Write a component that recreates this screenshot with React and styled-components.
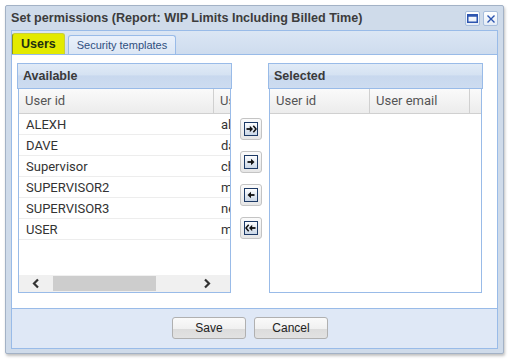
import React from 'react';
import styled, { createGlobalStyle } from 'styled-components';

const GlobalStyle = createGlobalStyle`
    html, body {
        margin: 0;
        padding: 0;
        background: #ffffff;
    }
    body {
        width: 509px;
        height: 361px;
        overflow: hidden;
    }
`;

const Page = styled.div`
    padding: 5px 0 0 5px;
`;

const Window = styled.div`
    width: 497px;
    height: 347px;
    border: 1px solid #a3b2c6;
    border-radius: 2px;
    background: #cfdbea;
    box-shadow: 1px 2px 3px rgba(0, 0, 0, 0.25);
    display: flex;
    flex-direction: column;
`;

const TitleBar = styled.div`
    height: 24px;
    display: flex;
    align-items: center;
    padding: 0 5px 0 5px;
`;

const Title = styled.div`
    flex: 1;
    font-family: 'Liberation Sans', Arial, sans-serif;
    font-weight: bold;
    font-size: 12.6px;
    color: #3c3c3c;
    white-space: nowrap;
`;

const Tools = styled.div`
    display: flex;
    gap: 3px;
    margin-top: 1px;
`;

const Tool = styled.div`
    width: 13px;
    height: 13px;
    border: 1px solid #a8bedc;
    border-radius: 2px;
    background: linear-gradient(#ffffff, #e4ecf6);
    display: flex;
    align-items: center;
    justify-content: center;
`;

const Frame = styled.div`
    flex: 1;
    margin: 0 5px 4px 5px;
    border: 1px solid #99bbe8;
    display: flex;
    flex-direction: column;
    background: #dfe8f6;
`;

const TabStrip = styled.div`
    height: 23px;
    display: flex;
    align-items: flex-end;
    gap: 3px;
    padding-left: 0;
    background: linear-gradient(#dbe6f4, #cedcee);
    border-bottom: 1px solid #99bbe8;
`;

const Tab = styled.div`
    height: ${p => (p.active ? '21px' : '19px')};
    padding: 0 8px;
    display: flex;
    align-items: center;
    font-family: 'Liberation Sans', Arial, sans-serif;
    font-size: ${p => (p.active ? '12.5px' : '11px')};
    font-weight: ${p => (p.active ? 'bold' : 'normal')};
    color: ${p => (p.active ? '#1f3010' : '#2f4f80')};
    background: ${p => (p.active ? '#e3ea00' : 'linear-gradient(#eaf1fb, #dbe6f4)')};
    border: 1px solid ${p => (p.active ? '#c9cf3a' : '#99bbe8')};
    border-left-color: ${p => (p.active ? '#8f9515' : '#99bbe8')};
    border-bottom: none;
    border-radius: 3px 3px 0 0;
    box-sizing: border-box;
`;

const Content = styled.div`
    height: 254px;
    background: #ffffff;
    border-bottom: 1px solid #99bbe8;
    display: flex;
    padding: 8px 0 0 5px;
    box-sizing: border-box;
`;

const GridPanel = styled.div`
    width: 215px;
    height: 230px;
    display: flex;
    flex-direction: column;
`;

const PanelHeader = styled.div`
    height: 26px;
    box-sizing: border-box;
    border: 1px solid #99bbe8;
    background: linear-gradient(#e1ebf7 0%, #d5e2f2 45%, #c8d8ee 50%, #cddcf0 100%);
    font-family: 'Liberation Sans', Arial, sans-serif;
    font-weight: bold;
    font-size: 12.5px;
    color: #3a3a3a;
    padding: 5px 0 0 5px;
`;

const GridBody = styled.div`
    flex: 1;
    margin: 0 1px;
    border: 1px solid #99bbe8;
    border-top: none;
    overflow: hidden;
    display: flex;
    flex-direction: column;
`;

const HeaderRow = styled.div`
    height: 24px;
    display: flex;
    background: linear-gradient(#fafafa, #ececec);
    border-bottom: 1px solid #d0d0d0;
    flex-shrink: 0;
`;

const HeaderCell = styled.div`
    width: ${p => p.w}px;
    flex-shrink: 0;
    box-sizing: border-box;
    border-right: ${p => (p.last ? 'none' : '1px solid #d0d0d0')};
    padding: 4px 0 0 6px;
    font-family: Roboto, 'Liberation Sans', sans-serif;
    font-size: 13px;
    color: #555555;
    white-space: nowrap;
    overflow: hidden;
`;

const Row = styled.div`
    height: 21px;
    display: flex;
    border-bottom: 1px solid #ededed;
    box-sizing: border-box;
`;

const Cell = styled.div`
    width: ${p => p.w}px;
    flex-shrink: 0;
    padding: 3px 0 0 7px;
    box-sizing: border-box;
    font-family: Roboto, 'Liberation Sans', sans-serif;
    font-size: 13px;
    color: #333333;
    white-space: nowrap;
    overflow: hidden;
`;

const Rows = styled.div`
    flex: 1;
`;

const HScroll = styled.div`
    height: 17px;
    background: #f0f0f0;
    display: flex;
    align-items: center;
    flex-shrink: 0;
`;

const ScrollArrow = styled.div`
    width: ${p => p.w}px;
    display: flex;
    justify-content: center;
    align-items: center;
`;

const Thumb = styled.div`
    width: 103px;
    height: 15px;
    background: #cdcdcd;
`;

const Spacer = styled.div`
    flex: 1;
`;

const MoveColumn = styled.div`
    width: 22px;
    margin: 55px 6px 0 8px;
    display: flex;
    flex-direction: column;
    gap: 11px;
`;

const MoveButton = styled.div`
    width: 22px;
    height: 22px;
    box-sizing: border-box;
    border: 1px solid #c4c4c4;
    border-radius: 3px;
    background: linear-gradient(#fbfbfb, #e6e6e6);
    display: flex;
    align-items: center;
    justify-content: center;
`;

const Footer = styled.div`
    flex: 1;
    display: flex;
    justify-content: center;
    align-items: flex-start;
    gap: 8px;
    padding: 8px 9px 0 0;
`;

const Button = styled.div`
    width: 74px;
    height: 22px;
    box-sizing: border-box;
    border: 1px solid #b0b0b0;
    border-radius: 3px;
    background: linear-gradient(#fafafa 0%, #f0f0f0 55%, #dcdcdc 56%, #e2e2e2 100%);
    display: flex;
    align-items: center;
    justify-content: center;
    font-family: 'Liberation Sans', Arial, sans-serif;
    font-size: 12px;
    color: #222222;
`;

const MoveIcon = ({ kind }) => {
    const arrows = {
        addAll: (
            <>
                <path d="M2.5 7h4.5" stroke="#111" strokeWidth="1.8" />
                <path d="M5.8 3.8L9 7L5.8 10.2Z" fill="#111" />
                <path d="M9.3 3.8L12 7L9.3 10.2" stroke="#111" strokeWidth="1.5" fill="none" />
            </>
        ),
        add: (
            <>
                <path d="M3.5 7h4.5" stroke="#111" strokeWidth="1.8" />
                <path d="M7 3.8L10.5 7L7 10.2Z" fill="#111" />
            </>
        ),
        remove: (
            <>
                <path d="M10.5 7H6" stroke="#111" strokeWidth="1.8" />
                <path d="M7 3.8L3.5 7L7 10.2Z" fill="#111" />
            </>
        ),
        removeAll: (
            <>
                <path d="M11.5 7H7" stroke="#111" strokeWidth="1.8" />
                <path d="M8.2 3.8L5 7L8.2 10.2Z" fill="#111" />
                <path d="M4.7 3.8L2 7L4.7 10.2" stroke="#111" strokeWidth="1.5" fill="none" />
            </>
        ),
    };
    return (
        <svg width="14" height="14" viewBox="0 0 14 14">
            <defs>
                <linearGradient id={`g-${kind}`} x1="0" y1="0" x2="0" y2="1">
                    <stop offset="0" stopColor="#ffffff" />
                    <stop offset="1" stopColor="#c9d6e6" />
                </linearGradient>
            </defs>
            <rect x="0.5" y="0.5" width="13" height="13" fill={`url(#g-${kind})`} stroke="#1d3a66" />
            {arrows[kind]}
        </svg>
    );
};

const users = [
    ['ALEXH', 'alexh@example.com'],
    ['DAVE', 'dave@example.com'],
    ['Supervisor', 'chris@example.com'],
    ['SUPERVISOR2', 'mark@example.com'],
    ['SUPERVISOR3', 'neil@example.com'],
    ['USER', 'mary@example.com'],
];

// the email column of the left grid is scrolled out of view, only its first letters show
const EMAIL_VISIBLE = 18;

class App extends React.Component {
    render() {
        return (
            <Page>
                <GlobalStyle />
                <Window>
                    <TitleBar>
                        <Title>Set permissions (Report: WIP Limits Including Billed Time)</Title>
                        <Tools>
                            <Tool>
                                <svg width="11" height="9" viewBox="0 0 11 9">
                                    <rect x="0.75" y="0.75" width="9.5" height="7.5" fill="none" stroke="#2c55b0" strokeWidth="1.5" />
                                    <rect x="0.75" y="0.75" width="9.5" height="2" fill="#2c55b0" />
                                </svg>
                            </Tool>
                            <Tool>
                                <svg width="10" height="10" viewBox="0 0 10 10">
                                    <path d="M1.5 1.5L8.5 8.5M8.5 1.5L1.5 8.5" stroke="#2c55b0" strokeWidth="1.4" />
                                </svg>
                            </Tool>
                        </Tools>
                    </TitleBar>
                    <Frame>
                        <TabStrip>
                            <Tab active>Users</Tab>
                            <Tab>Security templates</Tab>
                        </TabStrip>
                        <Content>
                            <GridPanel>
                                <PanelHeader>Available</PanelHeader>
                                <GridBody>
                                    <HeaderRow>
                                        <HeaderCell w={195}>User id</HeaderCell>
                                        <HeaderCell w={EMAIL_VISIBLE} last>User email</HeaderCell>
                                    </HeaderRow>
                                    <Rows>
                                        {users.map(([id, email]) => (
                                            <Row key={id}>
                                                <Cell w={195}>{id}</Cell>
                                                <Cell w={EMAIL_VISIBLE}>{email}</Cell>
                                            </Row>
                                        ))}
                                    </Rows>
                                    <HScroll>
                                        <ScrollArrow w={34}>
                                            <svg width="10" height="11" viewBox="0 0 10 11">
                                                <path d="M7 1.5L3 5.5L7 9.5" stroke="#333" strokeWidth="2.2" fill="none" />
                                            </svg>
                                        </ScrollArrow>
                                        <Thumb />
                                        <Spacer />
                                        <ScrollArrow w={46}>
                                            <svg width="10" height="11" viewBox="0 0 10 11">
                                                <path d="M3 1.5L7 5.5L3 9.5" stroke="#333" strokeWidth="2.2" fill="none" />
                                            </svg>
                                        </ScrollArrow>
                                    </HScroll>
                                </GridBody>
                            </GridPanel>
                            <MoveColumn>
                                <MoveButton><MoveIcon kind="addAll" /></MoveButton>
                                <MoveButton><MoveIcon kind="add" /></MoveButton>
                                <MoveButton><MoveIcon kind="remove" /></MoveButton>
                                <MoveButton><MoveIcon kind="removeAll" /></MoveButton>
                            </MoveColumn>
                            <GridPanel>
                                <PanelHeader>Selected</PanelHeader>
                                <GridBody>
                                    <HeaderRow>
                                        <HeaderCell w={100}>User id</HeaderCell>
                                        <HeaderCell w={100}>User email</HeaderCell>
                                        <HeaderCell w={11} last />
                                    </HeaderRow>
                                    <Rows />
                                </GridBody>
                            </GridPanel>
                        </Content>
                        <Footer>
                            <Button>Save</Button>
                            <Button>Cancel</Button>
                        </Footer>
                    </Frame>
                </Window>
            </Page>
        );
    }
}

export default App;
